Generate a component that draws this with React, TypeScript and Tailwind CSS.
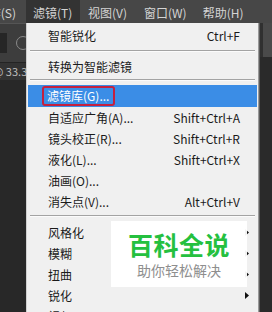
import React from "react";

type Row = { label: string; shortcut?: string; sub?: boolean };

const rowsA: Row[] = [
  { label: "自适应广角(A)...", shortcut: "Shift+Ctrl+A" },
  { label: "镜头校正(R)...", shortcut: "Shift+Ctrl+R" },
  { label: "液化(L)...", shortcut: "Shift+Ctrl+X" },
  { label: "油画(O)..." },
  { label: "消失点(V)...", shortcut: "Alt+Ctrl+V" },
];

const rowsB: Row[] = [
  { label: "风格化", sub: true },
  { label: "模糊", sub: true },
  { label: "扭曲", sub: true },
  { label: "锐化", sub: true },
  { label: "视频", sub: true },
];

function Arrow() {
  return (
    <svg width="4" height="7" viewBox="0 0 4 7" className="shrink-0">
      <path d="M0 0 L4 3.5 L0 7 Z" fill="#111" />
    </svg>
  );
}

function MenuRow({ r }: { r: Row }) {
  return (
    <div className="h-[21px] shrink-0 flex items-center justify-between pl-[21px] pr-[18px] text-[12px] leading-none text-[#1a1a1a]">
      <span>{r.label}</span>
      {r.shortcut && <span>{r.shortcut}</span>}
      {r.sub && (
        <span className="-mr-[9px]">
          <Arrow />
        </span>
      )}
    </div>
  );
}

function Sep({ h, top }: { h: string; top: string }) {
  return (
    <div className={`${h} shrink-0 flex flex-col`}>
      <div className={top} />
      <div className="mx-[3px] h-px bg-[#a3a3a3]" />
      <div className="mx-[3px] h-px bg-[#fbfbfb]" />
    </div>
  );
}

export default function App() {
  return (
    <div className="w-[272px] h-[312px] overflow-hidden flex flex-col bg-[#282828] font-['Noto_Sans_CJK_SC','Microsoft_YaHei',sans-serif]">
      {/* menu bar */}
      <div className="h-[23px] shrink-0 flex bg-[#474747] text-[12px] leading-none text-[#d4d4d4]">
        <div className="w-[26px] shrink-0 overflow-hidden flex justify-end items-center pr-[10px] pt-[2px]">
          <span className="whitespace-nowrap">作(S)</span>
        </div>
        <div className="w-[54px] shrink-0 flex items-center pl-[7px] pt-[2px] bg-[#333333]">
          <span className="whitespace-nowrap">滤镜(T)</span>
        </div>
        <div className="flex items-center pl-[8px] pr-[8px] pt-[2px] whitespace-nowrap">视图(V)</div>
        <div className="flex items-center pl-[9px] pr-[8px] pt-[2px] whitespace-nowrap">窗口(W)</div>
        <div className="flex items-center pl-[8px] pt-[2px] whitespace-nowrap">帮助(H)</div>
      </div>

      <div className="flex-1 flex min-h-0">
        {/* left strip */}
        <div className="w-[26px] shrink-0 flex flex-col overflow-hidden">
          <div className="h-[39px] shrink-0 bg-[#3d3d3d] border-t border-[#555] flex items-center">
            <div className="w-[7px] h-[20px] bg-[#262626] shrink-0" />
            <div className="ml-[9px] w-[14px] h-[14px] rounded-full border border-[#8a8a8a] shrink-0" />
          </div>
          <div className="h-[18px] shrink-0 bg-[#333333] border-t border-[#242424] flex items-center">
            <span className="ml-[-7px] whitespace-nowrap text-[11px] leading-none text-[#bdbdbd]">@ 33.3%</span>
          </div>
          <div className="flex-1 bg-[#282828]" />
        </div>

        {/* dropdown menu */}
        <div className="relative w-[233px] shrink-0 bg-[#f0f0f0] border-l border-[#cfcfcf] border-r border-r-[#9a9a9a] flex flex-col pt-[2px]">
          <MenuRow r={{ label: "智能锐化", shortcut: "Ctrl+F" }} />
          <Sep h="h-[10px]" top="h-[4px]" />
          <MenuRow r={{ label: "转换为智能滤镜" }} />
          <Sep h="h-[8px]" top="h-[2px]" />
          <div className="mx-[1px] h-[22px] shrink-0 bg-[#3b8de6] flex items-center pl-[14px]">
            <span className="h-[20px] flex items-center border-2 border-[#c4203f] rounded-[3px] pl-[3px] pr-[4px] text-[12px] leading-none text-white whitespace-nowrap">
              滤镜库(G)...
            </span>
          </div>
          {rowsA.map((r) => (
            <MenuRow key={r.label} r={r} />
          ))}
          <Sep h="h-[10px]" top="h-[3px]" />
          {rowsB.map((r) => (
            <MenuRow key={r.label} r={r} />
          ))}

          {/* watermark overlay */}
          <div className="absolute left-[84px] top-[198px] w-[136px] h-[66px] bg-white/95 flex flex-col items-center justify-center">
            <span className="text-[25px] leading-none font-bold text-[#25c03f] tracking-[0.5px]">百科全说</span>
            <span className="mt-[6px] text-[14px] leading-none text-[#8e8e8e]">助你轻松解决</span>
          </div>
        </div>

        {/* right strip */}
        <div className="w-[13px] shrink-0 flex flex-col border-l border-[#5c5c5c]">
          <div className="h-[34px] shrink-0 bg-[#454545] flex">
            <div className="w-[3px] bg-[#303030]" />
            <div className="flex-1 bg-[#4a4a4a]" />
          </div>
          <div className="flex-1 bg-[#2a2a2a]" />
        </div>
      </div>
    </div>
  );
}
